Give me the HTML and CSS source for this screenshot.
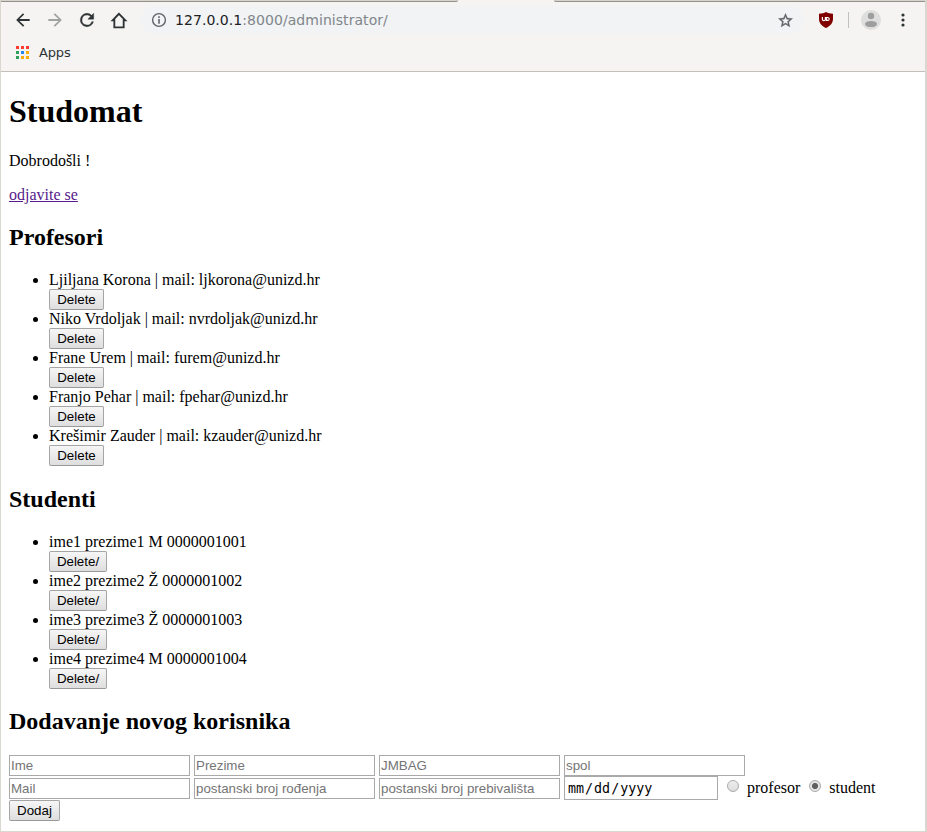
FILE: index.html
```html
<!DOCTYPE html>
<html lang="hr">
<head>
<meta charset="utf-8">
<title>Studomat</title>
<link rel="stylesheet" href="styles.css">
</head>
<body>
<div class="window">
  <div class="tabstrip"><i class="tabs-left"></i><i class="tabs-right"></i></div>
  <header class="toolbar">
    <svg class="icon nav" viewBox="0 0 24 24"><path d="M20 10.800H7.800l5.600-5.400L12 3.800 3.800 12l8.200 8.200 1.600-1.600-5.800-5.400H20z"/></svg>
    <svg class="icon nav disabled" viewBox="0 0 24 24"><path d="M12 3.800l-1.600 1.600 5.800 5.400H4v2.400h12.200l-5.800 5.400L12 20.200l8.200-8.200z"/></svg>
    <svg class="icon nav" viewBox="0 0 24 24"><path d="M17.650 6.350A7.950 7.950 0 0 0 12 4a8 8 0 1 0 7.730 10h-2.080A6 6 0 1 1 12 6c1.660 0 3.140.690 4.220 1.780L13 11h7V4z" stroke="currentColor" stroke-width=".5"/></svg>
    <svg class="icon nav" viewBox="0 0 24 24"><path d="M12 4.500L4.400 12.300h2v8.500h11.200v-8.500h2z" fill="none" stroke="currentColor" stroke-width="2.200"/></svg>
    <div class="address">
      <svg class="info" viewBox="0 0 16 16"><circle cx="8" cy="8" r="6.400" fill="none" stroke="currentColor" stroke-width="1.400"/><path d="M7.200 7h1.600v4.700H7.200zM7.200 4.300h1.600v1.600H7.200z"/></svg>
      <span class="url"><b>127.0.0.1</b>:8000/administrator/</span>
      <svg class="star" viewBox="0 0 24 24"><path stroke="currentColor" stroke-width=".5" d="M22 9.240l-7.190-.620L12 2 9.190 8.630 2 9.240l5.460 4.730L5.820 21 12 17.270 18.180 21l-1.630-7.030zM12 15.400l-3.760 2.270 1-4.280-3.320-2.880 4.380-.380L12 6.100l1.710 4.040 4.380.380-3.320 2.880 1 4.280z"/></svg>
    </div>
    <svg class="shield" viewBox="0 0 16 16"><path d="M8 0c2 1.300 4 1.600 7 1.700v5C15 11 12.500 13.800 8 16 3.500 13.800 1 11 1 6.700v-5C4 1.600 6 1.300 8 0z" fill="#800000"/><path d="M4.400 5v2.200a1.500 1.500 0 0 0 3 0V5M8.500 5.500v2.900h1.200a1.450 1.450 0 0 0 0-2.900h-1.200z" fill="none" stroke="#fff" stroke-width="1.200"/></svg>
    <i class="separator"></i>
    <svg class="avatar" viewBox="0 0 20 20"><circle cx="10" cy="10" r="10" fill="#dedede"/><circle cx="10" cy="6" r="3.200" fill="#9e9e9e"/><ellipse cx="10" cy="14" rx="6" ry="3.100" fill="#9e9e9e"/></svg>
    <svg class="more" viewBox="0 0 4 14"><circle cx="2" cy="2" r="1.600"/><circle cx="2" cy="7" r="1.600"/><circle cx="2" cy="12" r="1.600"/></svg>
  </header>
  <nav class="bookmarks">
    <div class="apps"><i class="red"></i><i class="red"></i><i class="red"></i><i class="green"></i><i class="blue"></i><i class="yellow"></i><i class="green"></i><i class="yellow"></i><i class="yellow"></i></div>
    <span>Apps</span>
  </nav>
  <main class="page">
    <h1>Studomat</h1>
    <p>Dobrodošli !</p>
    <p><a href="#">odjavite se</a></p>
    <h2>Profesori</h2>
    <ul>
      <li>Ljiljana Korona | mail: ljkorona@unizd.hr<div class="action"><button class="delete">Delete</button></div></li>
      <li>Niko Vrdoljak | mail: nvrdoljak@unizd.hr<div class="action"><button class="delete">Delete</button></div></li>
      <li>Frane Urem | mail: furem@unizd.hr<div class="action"><button class="delete">Delete</button></div></li>
      <li>Franjo Pehar | mail: fpehar@unizd.hr<div class="action"><button class="delete">Delete</button></div></li>
      <li>Krešimir Zauder | mail: kzauder@unizd.hr<div class="action"><button class="delete">Delete</button></div></li>
    </ul>
    <h2>Studenti</h2>
    <ul>
      <li>ime1 prezime1 M 0000001001<div class="action"><button class="remove">Delete/</button></div></li>
      <li>ime2 prezime2 Ž 0000001002<div class="action"><button class="remove">Delete/</button></div></li>
      <li>ime3 prezime3 Ž 0000001003<div class="action"><button class="remove">Delete/</button></div></li>
      <li>ime4 prezime4 M 0000001004<div class="action"><button class="remove">Delete/</button></div></li>
    </ul>
    <h2 class="form-title">Dodavanje novog korisnika</h2>
    <form>
      <div class="row"><input class="field" placeholder="Ime"><input class="field" placeholder="Prezime"><input class="field" placeholder="JMBAG"><input class="field" placeholder="spol"></div>
      <div class="row second"><input class="field" placeholder="Mail"><input class="field" placeholder="postanski broj rođenja"><input class="field" placeholder="postanski broj prebivališta"><div class="date"><span>mm</span>/<span>dd</span>/<span>yyyy</span></div>
        <input class="radio" type="radio" name="role" id="r1"><label for="r1">profesor</label>
        <input class="radio" type="radio" name="role" id="r2" checked><label for="r2">student</label></div>
      <div class="action"><button class="add" type="button">Dodaj</button></div>
    </form>
  </main>
</div>
</body>
</html>
```
FILE: styles.css
```css
* { box-sizing: border-box; }
body { margin: 0; background: #fff; overflow: hidden; }
.window {
  width: 927px; height: 832px;
  border: solid #dad7d0; border-width: 0 2px 1px 1px;
  font: 16px "Liberation Serif", serif; color: #000;
}
.tabstrip { display: flex; justify-content: space-between; height: 2px; background: #f5f4f2; }
.tabstrip i { background: #d6d3cc; border-bottom: 1px solid #96938c; }
.tabs-left { width: 457px; border-bottom-right-radius: 2px; }
.tabs-right { width: 371px; border-bottom-left-radius: 2px; }
.toolbar { display: flex; align-items: center; height: 36px; padding-left: 12px; background: #f5f4f2; color: #2e3436; }
svg { display: block; fill: currentColor; flex: none; }
.icon { width: 20px; height: 20px; margin-right: 12px; }
.nav.disabled { color: #a0a1a1; }
.address { display: flex; align-items: center; width: 663px; height: 28px; padding-left: 10px; border-radius: 14px; background: #f1f3f4; }
.info { width: 16px; height: 16px; color: #5f6368; }
.url { flex: 1; margin-left: 8px; font: 14px "DejaVu Sans", sans-serif; letter-spacing: .055px; color: #80868b; }
.url b { font-weight: 400; color: #202124; }
.star { width: 17px; height: 17px; margin: 0 10px 0 0; color: #5f6368; }
.shield { width: 16px; height: 16px; margin-left: 14px; }
.separator { width: 1px; height: 16px; margin-left: 14px; background: #c1c1c0; }
.avatar { width: 20px; height: 20px; margin-left: 12px; }
.more { width: 4px; height: 14px; margin-left: 20px; }
.bookmarks { display: flex; align-items: center; height: 34px; padding: 0 0 4px 15px; background: #f5f4f2; border-bottom: 1px solid #c2c0b8; font: 13px "DejaVu Sans", sans-serif; letter-spacing: -.15px; color: #2e3436; }
.apps { display: grid; grid-template-columns: repeat(3, 3px); grid-auto-rows: 3px; gap: 2px; margin-right: 10px; }
.red { background: #fb3b30; }
.green { background: #2da05a; }
.blue { background: #2388f2; }
.yellow { background: #fbac05; }
.page { display: flow-root; padding: 0 8px; }
h1 { font-size: 32px; line-height: 37px; margin: 21px 0 22px; }
p { margin: 0 0 16px; line-height: 18px; }
a { color: #551a8b; }
h2 { font-size: 24px; line-height: 27px; margin: 20px 0; }
ul { margin: 0; padding-left: 40px; }
li { line-height: 18px; }
.action { height: 21px; }
button, .field { display: block; height: 21px; margin: 0; font: 13.333px "Liberation Sans", sans-serif; }
button { padding: 0; border: 1px solid #a5a5a5; border-bottom-color: #999; border-radius: 2px; background: linear-gradient(#f6f6f6, #dedede); color: #000; white-space: nowrap; }
.delete { width: 55px; }
.remove { width: 58px; }
.add { width: 51px; }
h2.form-title { margin: 19px 0 20px; }
.row { display: flex; height: 21px; gap: 4px; }
.second { height: 24px; align-items: center; gap: 0; }
.field { width: 181px; padding: 1px; border: 1px solid #a9a9a9; border-radius: 0; background: #fff; outline: 0; }
.second .field { margin: 1px 4px 0 0; }
.field::placeholder { color: #757575; }
.date { width: 154px; height: 24px; padding: 1px 0 0 2px; border: 1px solid #a9a9a9; font: 13.333px/22px "DejaVu Sans Mono", monospace; }
.date span { padding: 0 1px; }
.radio { appearance: none; width: 12px; height: 12px; margin: 0 8px 4px 9px; border: 1px solid #aaa; border-radius: 50%; background: linear-gradient(#eee, #ddd); }
.radio:checked { background: radial-gradient(circle, #606060 0 2.700px, #e5e5e5 3.400px); }
```
